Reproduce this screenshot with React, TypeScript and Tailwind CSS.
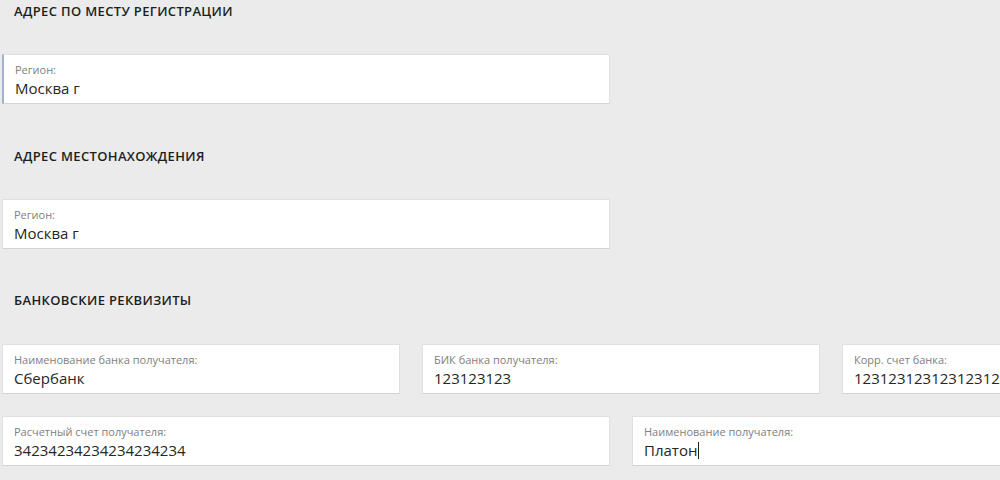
import React from 'react'

type FieldProps = {
  label: string
  value: string
  active?: boolean
  cursor?: boolean
}

function Field({ label, value, active, cursor }: FieldProps) {
  return (
    <div
      className={
        'h-[50px] bg-white border border-[#e0e0e0] border-b-[#d4d4d4] pl-[11px] pt-[8px] shrink-0 ' +
        (active ? 'border-l-2 border-l-[#9db3cf] pl-[10px]' : '')
      }
    >
      <div className="text-[11px] leading-[14px] text-[#808080] whitespace-nowrap">{label}</div>
      <div className="mt-[2px] text-[15px] leading-[19px] text-[#262626] whitespace-nowrap flex items-center">
        {value}
        {cursor && <span className="inline-block w-px h-[17px] bg-[#222] ml-px" />}
      </div>
    </div>
  )
}

function Heading({ children }: { children: React.ReactNode }) {
  return (
    <div className="h-[22px] leading-[22px] pl-3 text-[13px] font-semibold text-[#1e1e1e] uppercase tracking-[0.35px]">
      {children}
    </div>
  )
}

export default function App() {
  return (
    <div
      className="w-[1000px] h-[480px] overflow-hidden bg-[#ebebeb] pl-[2px]"
      style={{ fontFamily: '"Open Sans", "Noto Sans", sans-serif' }}
    >
      {/* registration address */}
      <Heading>Адрес по месту регистрации</Heading>
      <div className="mt-[32px] w-[608px]">
        <Field label="Регион:" value="Москва г" active />
      </div>

      {/* location */}
      <div className="mt-[41px]">
        <Heading>Адрес местонахождения</Heading>
      </div>
      <div className="mt-[32px] w-[608px]">
        <Field label="Регион:" value="Москва г" />
      </div>

      {/* bank */}
      <div className="mt-[40px]">
        <Heading>Банковские реквизиты</Heading>
      </div>
      <div className="mt-[33px] w-[1238px] grid grid-cols-3 gap-[22px]">
        <Field label="Наименование банка получателя:" value="Сбербанк" />
        <Field label="БИК банка получателя:" value="123123123" />
        <Field label="Корр. счет банка:" value="12312312312312312312" />
      </div>
      <div className="mt-[22px] w-[1238px] grid grid-cols-2 gap-[22px]">
        <Field label="Расчетный счет получателя:" value="34234234234234234234" />
        <Field label="Наименование получателя:" value="Платон" cursor />
      </div>
    </div>
  )
}
